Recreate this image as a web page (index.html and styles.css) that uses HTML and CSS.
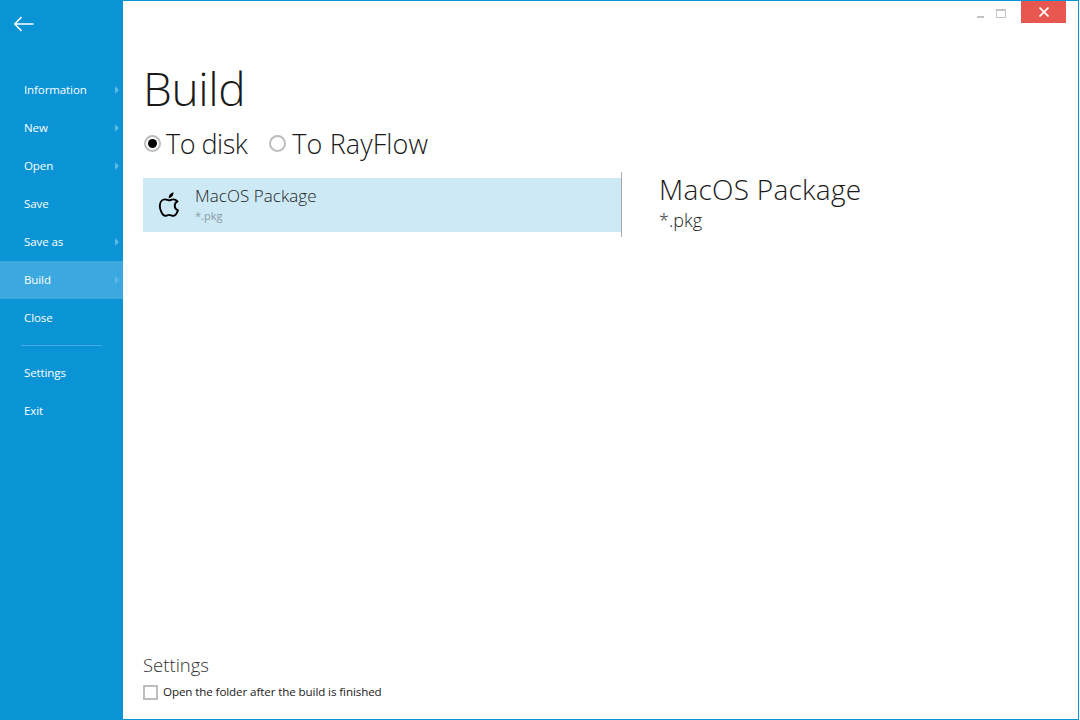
FILE: index.html
```html
<!DOCTYPE html>
<html lang="en">
<head>
<meta charset="utf-8">
<title>Build</title>
<link rel="stylesheet" href="styles.css">
</head>
<body>
<div class="window">
  <nav class="sidebar">
    <div class="back">
      <svg width="22" height="16" viewBox="0 0 22 16"><path d="M8.500 1 L1.800 8 L8.500 15 M1.800 8 H20.500" fill="none" stroke="#fff" stroke-width="1.5"/></svg>
    </div>
    <ul class="menu">
      <li class="item"><span>Information</span><i class="caret"></i></li>
      <li class="item"><span>New</span><i class="caret"></i></li>
      <li class="item"><span>Open</span><i class="caret"></i></li>
      <li class="item"><span>Save</span></li>
      <li class="item"><span>Save as</span><i class="caret"></i></li>
      <li class="item active"><span>Build</span><i class="caret"></i></li>
      <li class="item"><span>Close</span></li>
      <li class="divider"></li>
      <li class="item"><span>Settings</span></li>
      <li class="item"><span>Exit</span></li>
    </ul>
  </nav>
  <main class="content">
    <div class="controls">
      <span class="min"></span>
      <span class="max"></span>
      <span class="close">
        <svg width="10" height="10" viewBox="0 0 10 10"><path d="M0.5 0.5 L9.5 9.5 M9.500 0.5 L0.5 9.500" stroke="#fff" stroke-width="1.7"/></svg>
      </span>
    </div>
    <h1 class="title">Build</h1>
    <div class="targets">
      <label class="target"><span class="radio checked"></span>To disk</label>
      <label class="target wide"><span class="radio"></span>To RayFlow</label>
    </div>
    <div class="panes">
      <div class="list">
        <div class="row">
          <svg class="apple" width="24" height="28" viewBox="0 0 24 28"><path d="M12.300 10.400c-1.200 0-2.600-1-4.200-1-3 0-5.300 2.700-5.300 6.600 0 4.300 3 9.900 5.400 9.900 1.400 0 2.500-1 4-1 1.500 0 2.400 1 3.900 1 2.200 0 4.100-3.300 4.800-5.500-2.100-1-3.200-2.700-3.200-4.600 0-1.900 1-3.400 2.600-4.400-1-1.300-2.400-2-3.900-2-1.600 0-2.900 1-4.100 1z" fill="none" stroke="#000" stroke-width="1.900"/><path d="M11.600 8.300c0-3.100 2.100-5.300 4.900-6 .2 3.100-2 5.500-4.900 6z" fill="#000"/></svg>
          <div class="row-text">
            <div class="row-name">MacOS Package</div>
            <div class="row-ext">*.pkg</div>
          </div>
        </div>
      </div>
      <div class="detail">
        <div class="detail-name">MacOS Package</div>
        <div class="detail-ext">*.pkg</div>
      </div>
    </div>
    <section class="settings">
      <div class="settings-title">Settings</div>
      <label class="check"><span class="box"></span>Open the folder after the build is finished</label>
    </section>
  </main>
</div>
</body>
</html>
```
FILE: styles.css
```css
* { box-sizing: border-box; }
html, body { margin: 0; height: 100%; }
body {
  width: 1080px;
  height: 720px;
  overflow: hidden;
  background: #fff;
  font-family: "Open Sans", "Noto Sans", sans-serif;
  color: #1a1a1a;
}
.window {
  display: flex;
  width: 1079px;
  height: 720px;
  border: 1px solid #0a94d6;
  border-left: 0;
}
.sidebar {
  width: 123px;
  flex: none;
  background: #0a94d6;
  color: #fff;
  margin-top: -1px;
  margin-bottom: -1px;
}
.back { height: 71px; padding: 16px 0 0 13px; }
.back svg { display: block; }
.menu { list-style: none; margin: 0; padding: 0; }
.item {
  position: relative;
  height: 38px;
  display: flex;
  align-items: center;
  padding-left: 24px;
  padding-bottom: 1px;
  font-size: 11.5px;
  letter-spacing: -0.1px;
}
.item.active { background: #3ba9e0; }
.caret {
  position: absolute;
  right: 4px;
  top: 15px;
  width: 0;
  height: 0;
  border-left: 4px solid #5cb8e6;
  border-top: 4px solid transparent;
  border-bottom: 4px solid transparent;
}
.divider {
  height: 1px;
  margin: 8px 21px 8px 21px;
  background: #44ade2;
}
.content {
  flex: 1;
  position: relative;
  display: flex;
  flex-direction: column;
  padding: 0 0 0 20px;
  min-width: 0;
}
.controls {
  position: absolute;
  top: 0;
  right: 12px;
  display: flex;
  align-items: flex-start;
}
.min { width: 7px; height: 2px; background: #c4c4c4; margin: 15px 12px 0 0; }
.max { width: 10px; height: 9px; border: 1px solid #c4c4c4; border-top-width: 2px; margin: 8px 15px 0 0; }
.close {
  width: 45px;
  height: 22px;
  background: #e8574f;
  display: flex;
  align-items: center;
  justify-content: center;
}
.title {
  margin: 56px 0 0;
  font-size: 46px;
  line-height: 62px;
  font-weight: 300;
  letter-spacing: -0.4px;
  height: 62px;
}
.targets {
  display: flex;
  gap: 21px;
  margin-top: 6px;
  height: 36px;
  align-items: center;
  font-size: 27px;
  font-weight: 300;
  letter-spacing: -0.5px;
}
.target { display: flex; align-items: center; gap: 5px; }
.target.wide { letter-spacing: 0.1px; gap: 6px; }
.radio {
  width: 17px;
  height: 17px;
  border: 2px solid #bdbdbd;
  border-radius: 50%;
  flex: none;
  margin-left: 1px;
  display: flex;
  align-items: center;
  justify-content: center;
}
.radio.checked::after {
  content: "";
  width: 9px;
  height: 9px;
  border-radius: 50%;
  background: #000;
}
.panes { display: flex; margin-top: 11px; height: 65px; }
.list {
  width: 479px;
  flex: none;
  height: 65px;
  border-right: 1px solid #a9a9a9;
}
.row {
  width: 478px;
  height: 54px;
  margin-top: 6px;
  background: #cde9f6;
  display: flex;
  padding-left: 14px;
}
.apple { flex: none; margin-top: 12px; }
.row-text { padding-left: 14px; }
.row-name { font-size: 17px; font-weight: 300; line-height: 23px; margin-top: 6px; color: #222; letter-spacing: 0.05px; }
.row-ext { font-size: 11px; line-height: 14px; margin-top: 2px; color: #8a9aa5; }
.detail { padding: 0 0 0 37px; }
.detail-name { font-size: 28px; font-weight: 300; line-height: 36px; letter-spacing: 0.25px; margin-top: -1px; }
.detail-ext { font-size: 18px; font-weight: 300; line-height: 24px; margin-top: 1px; }
.settings { margin-top: auto; padding-bottom: 19px; }
.settings-title { font-size: 18.500px; font-weight: 300; line-height: 24px; color: #333; }
.check { display: flex; align-items: center; gap: 5px; font-size: 11.6px; line-height: 16px; margin-top: 7px; letter-spacing: -0.1px; }
.box { width: 15px; height: 15px; border: 2px solid #bdbdbd; flex: none; }
```
